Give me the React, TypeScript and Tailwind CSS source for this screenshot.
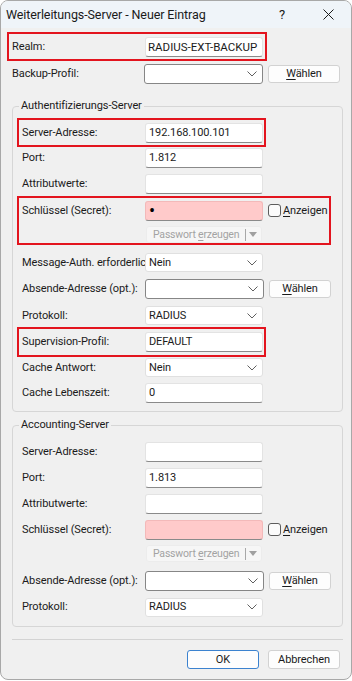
import type { ReactNode } from "react"

const Chevron = () => (
  <svg width="10" height="6" viewBox="0 0 10 6" fill="none" className="shrink-0">
    <path d="M0.5 0.5 L5 5 L9.5 0.5" stroke="#606060" strokeWidth="1" />
  </svg>
)

const TextBox = ({ value, pink }: { value?: string; pink?: boolean }) => (
  <div
    className={
      pink
        ? "w-[118px] h-[20px] rounded-[3px] border border-[#f3b9b9] border-b-[#8a8a8a] bg-[#ffcaca] flex items-center pl-[3px]"
        : "w-[118px] h-[20px] rounded-[3px] border border-[#e3e3e3] border-b-[#8a8a8a] bg-white flex items-center pl-[3px]"
    }
  >
    {value}
  </div>
)

const Combo = ({ value }: { value: string }) => (
  <div className="w-[118px] h-[19px] rounded-[3px] border border-[#e0e0e0] bg-white flex items-center justify-between pl-[3px] pr-[5px]">
    <span>{value}</span>
    <Chevron />
  </div>
)

const EditCombo = () => (
  <div className="w-[119px] h-[20px] rounded-[3px] border border-[#868686] bg-white flex items-center justify-end pr-[5px]">
    <Chevron />
  </div>
)

const Waehlen = ({ wide }: { wide?: boolean }) => (
  <div
    className={
      wide
        ? "ml-[5px] w-[72px] h-[18px] rounded-[3px] border border-[#d2d2d2] bg-[#fdfdfd] flex items-center justify-center"
        : "ml-[5px] w-[62px] h-[18px] rounded-[3px] border border-[#d2d2d2] bg-[#fdfdfd] flex items-center justify-center"
    }
  >
    <span>
      <span className="underline underline-offset-2">W</span>ählen
    </span>
  </div>
)

const Row = ({ label, h, children }: { label: string; h: string; children?: ReactNode }) => (
  <div className={`flex items-center ${h}`}>
    <div className="w-[126px] shrink-0 pl-[3px] whitespace-nowrap overflow-hidden">{label}</div>
    {children}
  </div>
)

const Anzeigen = () => (
  <div className="flex items-center ml-[5px] gap-[2px]">
    <div className="w-[13px] h-[13px] rounded-[3px] border border-[#5c5c5c] bg-[#fbfbfb]" />
    <span>
      <span className="underline underline-offset-2">A</span>nzeigen
    </span>
  </div>
)

const PasswortBtn = () => (
  <div className="ml-[127px] w-[116px] h-[17px] rounded-[3px] border border-[#ececec] bg-[#f6f6f6] flex items-center text-[#a3a3a3] pl-[6px] whitespace-nowrap text-[10.5px] tracking-[-0.2px]">
    <span>
      Passwort <span className="underline underline-offset-2">e</span>rzeugen
    </span>
    <span className="ml-auto w-px h-[12px] bg-[#a8a8a8]" />
    <svg width="8" height="5" viewBox="0 0 8 5" className="ml-[3px] mr-[4px]">
      <path d="M0 0 L8 0 L4 5 Z" fill="#a0a0a0" />
    </svg>
  </div>
)

export default function App() {
  return (
    <div className="w-[352px] h-[681px] bg-white text-[11px] leading-[14px] text-[#1b1b1b] font-[Roboto,'Liberation_Sans',sans-serif] tracking-[-0.1px]">
      <div className="h-[680px] rounded-[8px] border border-[#a8a8a8] bg-[#f0f0f0] overflow-hidden flex flex-col">
        {/* title bar */}
        <div className="h-[27px] bg-[#eff4f9] flex items-center pl-[5px] shrink-0">
          <div className="text-[12.5px] tracking-[-0.1px] text-[#1a1a1a]">Weiterleitungs-Server - Neuer Eintrag</div>
          <div className="ml-auto w-[46px] text-center text-[13px] text-[#1a1a1a]">?</div>
          <div className="w-[46px] flex justify-center">
            <svg width="11" height="11" viewBox="0 0 11 11">
              <path d="M0.5 0.5 L10.5 10.5 M10.5 0.5 L0.5 10.5" stroke="#1a1a1a" strokeWidth="1" />
            </svg>
          </div>
        </div>

        <div className="flex flex-col pl-[11px] pr-[8px]">
          {/* Realm */}
          <div className="-ml-[3px] mt-[6px] w-[256px] h-[25px] ring-2 ring-[#e3141e] flex items-center pl-[3px]">
            <div className="w-[133px]">Realm:</div>
            <div className="w-[118px] h-[20px] rounded-[3px] border border-[#e3e3e3] border-b-[#8a8a8a] bg-white flex items-center pl-[2px] text-[11.5px] tracking-[0px]">
              RADIUS-EXT-BACKUP
            </div>
          </div>
          <div className="mt-[2px] h-[25px] flex items-center">
            <div className="w-[132px]">Backup-Profil:</div>
            <EditCombo />
            <Waehlen wide />
          </div>

          {/* Authentifizierungs-Server */}
          <fieldset className="mt-[13px] border border-[#d6d6d6] rounded-[4px] px-[6px] pb-[6px]">
            <legend className="px-[2px] leading-[14px]">Authentifizierungs-Server</legend>
            <div className="pt-[7px] flex flex-col">
              <div className="w-[245px] ring-2 ring-[#e3141e]">
                <Row label="Server-Adresse:" h="h-[25px]">
                  <TextBox value="192.168.100.101" />
                </Row>
              </div>
              <Row label="Port:" h="h-[26px]">
                <TextBox value="1.812" />
              </Row>
              <Row label="Attributwerte:" h="h-[26px]">
                <TextBox />
              </Row>
              <div className="mt-[1px] mb-[6px] w-[310px] ring-2 ring-[#e3141e]">
                <Row label="Schlüssel (Secret):" h="h-[25px]">
                  <div className="w-[118px] h-[20px] rounded-[3px] border border-[#f3b9b9] border-b-[#8a8a8a] bg-[#ffcaca] flex items-center pl-[3px] text-[18px] leading-[18px] text-black">
                    •
                  </div>
                  <Anzeigen />
                </Row>
                <div className="h-[20px] pt-[3px]">
                  <PasswortBtn />
                </div>
              </div>
              <Row label="Message-Auth. erforderlich" h="h-[27px]">
                <Combo value="Nein" />
              </Row>
              <Row label="Absende-Adresse (opt.):" h="h-[26px]">
                <EditCombo />
                <Waehlen />
              </Row>
              <Row label="Protokoll:" h="h-[27px]">
                <Combo value="RADIUS" />
              </Row>
              <div className="w-[245px] ring-2 ring-[#e3141e]">
                <Row label="Supervision-Profil:" h="h-[26px]">
                  <TextBox value="DEFAULT" />
                </Row>
              </div>
              <Row label="Cache Antwort:" h="h-[25px]">
                <Combo value="Nein" />
              </Row>
              <Row label="Cache Lebenszeit:" h="h-[25px]">
                <TextBox value="0" />
              </Row>
            </div>
          </fieldset>

          {/* Accounting-Server */}
          <fieldset className="mt-[6px] border border-[#d6d6d6] rounded-[4px] px-[6px] pb-[6px]">
            <legend className="px-[2px] leading-[14px]">Accounting-Server</legend>
            <div className="pt-[7px] flex flex-col">
              <Row label="Server-Adresse:" h="h-[26px]">
                <TextBox />
              </Row>
              <Row label="Port:" h="h-[26px]">
                <TextBox value="1.813" />
              </Row>
              <Row label="Attributwerte:" h="h-[25px]">
                <TextBox />
              </Row>
              <Row label="Schlüssel (Secret):" h="h-[27px]">
                <TextBox pink />
                <Anzeigen />
              </Row>
              <div className="h-[25px] pt-[2px]">
                <PasswortBtn />
              </div>
              <Row label="Absende-Adresse (opt.):" h="h-[26px]">
                <EditCombo />
                <Waehlen />
              </Row>
              <Row label="Protokoll:" h="h-[26px]">
                <Combo value="RADIUS" />
              </Row>
            </div>
          </fieldset>

          <div className="mt-[12px] h-px bg-[#d3d3d3]" />

          <div className="mt-[10px] flex justify-end pr-[3px] gap-[9px]">
            <div className="w-[72px] h-[19px] rounded-[3px] border border-[#3b82cf] bg-[#fdfdfd] flex items-center justify-center">
              OK
            </div>
            <div className="w-[72px] h-[19px] rounded-[3px] border border-[#d2d2d2] bg-[#fdfdfd] flex items-center justify-center">
              Abbrechen
            </div>
          </div>
        </div>
      </div>
    </div>
  )
}
